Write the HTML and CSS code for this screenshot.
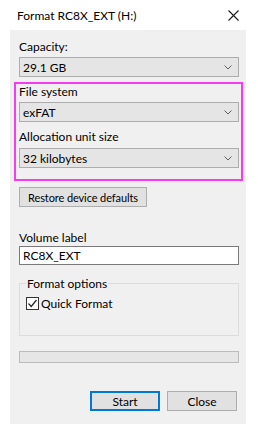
FILE: index.html
```html
<!DOCTYPE html>
<html>
<head>
<meta charset="utf-8">
<link rel="stylesheet" href="styles.css">
</head>
<body>
<div class="titlebar">
  <span class="title">Format RC8X_EXT (H:)</span>
  <svg class="close" width="11" height="11" viewBox="0 0 11 11"><path d="M0.5 0.5 L10.5 10.5 M10.5 0.5 L0.5 10.5" stroke="#1a1a1a" stroke-width="1.1" fill="none"/></svg>
</div>
<div class="panel">
  <div class="label lbl-cap">Capacity:</div>
  <div class="select">
    <span>29.1 GB</span>
    <svg class="chev" width="8" height="5" viewBox="0 0 8 5"><path d="M0.5 0.5 L4 4 L7.5 0.5" stroke="#606060" stroke-width="1" fill="none"/></svg>
  </div>
  <div class="highlight">
    <div class="label">File system</div>
    <div class="select">
      <span>exFAT</span>
      <svg class="chev" width="8" height="5" viewBox="0 0 8 5"><path d="M0.5 0.5 L4 4 L7.5 0.5" stroke="#606060" stroke-width="1" fill="none"/></svg>
    </div>
    <div class="label lbl-alloc">Allocation unit size</div>
    <div class="select sel-alloc">
      <span>32 kilobytes</span>
      <svg class="chev" width="8" height="5" viewBox="0 0 8 5"><path d="M0.5 0.5 L4 4 L7.5 0.5" stroke="#606060" stroke-width="1" fill="none"/></svg>
    </div>
  </div>
  <div class="btn restore">Restore device defaults</div>
  <div class="label lbl-vol">Volume label</div>
  <div class="input">RC8X_EXT</div>
  <fieldset class="group">
    <legend>Format options</legend>
    <div class="check-row">
      <span class="checkbox"><svg width="11" height="11" viewBox="0 0 11 11"><path d="M1.5 5.5 L4.2 8.5 L9.5 2" stroke="#222" stroke-width="1.2" fill="none"/></svg></span>
      <span>Quick Format</span>
    </div>
  </fieldset>
  <div class="progress"></div>
  <div class="actions">
    <div class="btn primary">Start</div>
    <div class="btn">Close</div>
  </div>
</div>
</body>
</html>
```
FILE: styles.css
```css
html, body {
  margin: 0;
  padding: 0;
  background: #ffffff;
}
body {
  width: 258px;
  height: 429px;
  overflow: hidden;
  font-family: Lato, "Liberation Sans", sans-serif;
  font-size: 12px;
  line-height: 15px;
  color: #000;
}
.titlebar {
  height: 30px;
  display: flex;
  align-items: center;
  justify-content: space-between;
  padding: 0 19px 0 17px;
}
.title {
  font-size: 12px;
  color: #000;
}
.close {
  display: block;
}
.panel {
  margin: 0 12px 0 10px;
  height: 394px;
  box-sizing: border-box;
  background: #f0f0f0;
  padding: 9px 7px 0 9px;
  display: flex;
  flex-direction: column;
}
.label {
  height: 15px;
}
.select {
  margin-top: 3px;
  height: 20px;
  box-sizing: border-box;
  border: 1px solid #adadad;
  background: #e5e5e5;
  display: flex;
  align-items: center;
  justify-content: space-between;
  padding: 0 6px 0 3px;
}
.chev {
  display: block;
}
.highlight {
  margin: 5px -4px 0 -5px;
  border: 2px solid #f53cf0;
  padding: 0 2px 11px 3px;
}
.lbl-alloc {
  margin-top: 7px;
}
.sel-alloc {
  margin-top: 4px;
}
.btn {
  height: 20px;
  box-sizing: border-box;
  border: 1px solid #adadad;
  background: #e1e1e1;
  display: flex;
  align-items: center;
  justify-content: center;
}
.restore {
  margin-top: 6px;
  width: 128px;
  font-size: 11px;
  letter-spacing: -0.1px;
}
.lbl-vol {
  margin-top: 23px;
}
.input {
  margin-top: 1px;
  height: 19px;
  box-sizing: border-box;
  border: 1px solid #7a7a7a;
  background: #fff;
  padding: 0 3px;
  display: flex;
  align-items: center;
}
.group {
  margin: 11px 0 0 0;
  border: 1px solid #dcdcdc;
  padding: 0 0 24px 6px;
  min-width: 0;
}
.group legend {
  padding: 0 1px;
  line-height: 15px;
}
.check-row {
  margin-top: 5px;
  display: flex;
  align-items: center;
  height: 15px;
}
.checkbox {
  width: 13px;
  height: 13px;
  box-sizing: border-box;
  border: 1px solid #333;
  background: #fff;
  display: flex;
  align-items: center;
  justify-content: center;
  margin-right: 2px;
}
.checkbox svg {
  display: block;
}
.progress {
  margin-top: 15px;
  height: 12px;
  box-sizing: border-box;
  border: 1px solid #bcbcbc;
  background: #e6e6e6;
}
.actions {
  margin-top: 28px;
  display: flex;
  justify-content: flex-end;
  gap: 7px;
  padding-right: 2px;
}
.actions .btn {
  width: 70px;
}
.actions .primary {
  border: 2px solid #0078d7;
}
```
